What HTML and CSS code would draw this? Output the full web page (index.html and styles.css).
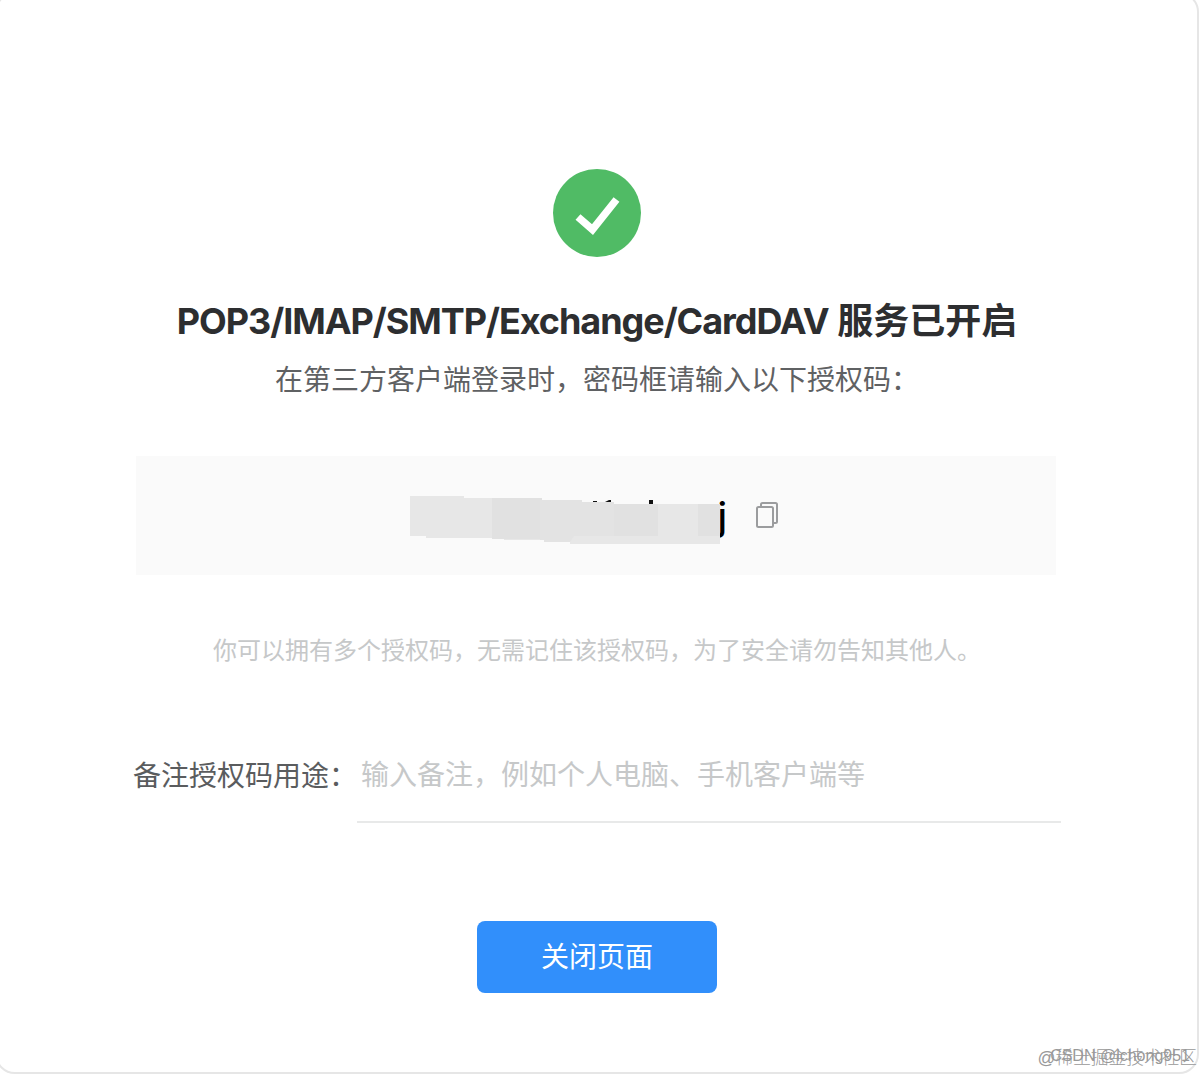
FILE: index.html
```html
<!DOCTYPE html>
<html lang="zh-CN">
<head>
    <meta charset="UTF-8" />
    <meta name="viewport" content="width=device-width, initial-scale=1.0"/>
    <title>服务已开启</title>
    <link rel="stylesheet" href="styles.css">
</head>
<body>
    <main class="card">
        <svg class="success-icon" viewBox="0 0 88 88">
            <circle cx="44" cy="44" r="44" fill="#50bb65"/>
            <path d="M25 48 L39.5 60.5 L63.5 30.5" fill="none" stroke="#fff" stroke-width="7.5"/>
        </svg>
        <h1 class="title"><span class="title-latin">POP3/IMAP/SMTP/Exchange/CardDAV</span> 服务已开启</h1>
        <p class="subtitle">在第三方客户端登录时，密码框请输入以下授权码：</p>

        <div class="code-box">
            <div class="code-value">
                j
                <!-- Covers the code itself -->
                <svg class="code-mask" viewBox="0 0 320 56">
                    <path d="M185 11h4v2h-4zM197 12l4-2h2v4h-6zM241 10h4v5h-4z" fill="#111"/>
                    <path d="M2 6H56V8H134V10H174V12H206V14H312V54H162V52H136V50H96V48H18V46H2Z" fill="#e7e7e7"/>
                    <path d="M84 8H134V49H84Z" fill="#e1e1e1"/>
                    <path d="M134 10H174V12H206V46H166L162 52H136V50H132V10Z" fill="#e3e3e3"/>
                    <path d="M206 14H250V46H206ZM290 14H312V46H290Z" fill="#e1e1e1"/>
                </svg>
            </div>
            <svg class="copy-icon" viewBox="0 0 22 26">
                <rect x="1" y="5" width="16" height="20" rx="1.5"/>
                <path d="M5 5V2.5Q5 1 6.5 1H19.5Q21 1 21 2.5V19.5Q21 21 19.5 21H17"/>
            </svg>
        </div>

        <p class="hint">你可以拥有多个授权码，无需记住该授权码，为了安全请勿告知其他人。</p>

        <div class="remark-row">
            <label class="remark-label" for="remark">备注授权码用途：</label>
            <input class="remark-input" type="text" id="remark" placeholder="输入备注，例如个人电脑、手机客户端等"/>
        </div>

        <button class="close-btn">关闭页面</button>
    </main>
    <div class="watermark watermark-community">@稀土掘金技术社区</div>
    <div class="watermark watermark-author">CSDN @lchong951</div>
</body>
</html>
```
FILE: styles.css
```css
* {
    box-sizing: border-box;
}

body {
    margin: 0;
    height: 1074px;
    overflow: hidden;
    background: #fff;
    font-family: Inter, 'Noto Sans CJK SC', sans-serif;
    color: #2d2e30;
}

.card {
    display: flex;
    flex-direction: column;
    align-items: center;
    width: 1204px;
    height: 1082px;
    margin: -8px 0 0 -5px;
    padding-top: 175px;
    border: 2px solid #e6e6e6;
    border-radius: 20px;
}

.success-icon {
    width: 88px;
    height: 88px;
}

.title {
    margin: 38px 0 0;
    font-size: 36px;
    line-height: 52px;
    font-weight: 700;
    white-space: nowrap;
}

.title-latin {
    letter-spacing: -1.05px;
}

.subtitle {
    margin: 11px 0 0;
    font-family: 'Noto Sans CJK SC', sans-serif;
    font-size: 28px;
    line-height: 40px;
    color: #5f6163;
}

.code-box {
    display: flex;
    align-items: center;
    width: 920px;
    height: 119px;
    margin-top: 58px;
    margin-right: 2px;
    padding-left: 272px;
    background: #fafafa;
}

.code-value {
    position: relative;
    width: 320px;
    height: 56px;
    padding-right: 1px;
    font-size: 38px;
    line-height: 56px;
    font-weight: 500;
    text-align: right;
    color: #000;
}

.code-mask {
    position: absolute;
    top: 2px;
    left: 0;
    width: 320px;
    height: 56px;
}

.copy-icon {
    width: 22px;
    height: 26px;
    margin: -1px 0 0 28px;
    fill: none;
    stroke: #9b9c9e;
    stroke-width: 2;
}

.hint {
    margin: 56px 0 0;
    font-family: 'Noto Sans CJK SC', sans-serif;
    font-size: 24px;
    line-height: 36px;
    color: #c6c8c9;
}

.remark-row {
    display: flex;
    width: 928px;
    height: 97px;
    margin-top: 59px;
}

.remark-label {
    width: 224px;
    font-family: 'Noto Sans CJK SC', sans-serif;
    font-size: 28px;
    line-height: 97px;
    white-space: nowrap;
    color: #5a5c5e;
}

.remark-input {
    flex: 1;
    padding: 0 4px 2px;
    border: none;
    border-bottom: 2px solid #e8e9e9;
    outline: none;
    background: none;
    font-family: 'Noto Sans CJK SC', sans-serif;
    font-size: 28px;
}

.remark-input::placeholder {
    color: #c6c8c9;
}

.close-btn {
    width: 240px;
    height: 72px;
    margin-top: 98px;
    padding-bottom: 5px;
    border: none;
    border-radius: 8px;
    background: #318ffb;
    color: #fff;
    font-family: 'Noto Sans CJK SC', sans-serif;
    font-size: 28px;
    cursor: pointer;
}

.watermark {
    position: absolute;
    white-space: nowrap;
    line-height: 24px;
    color: #999;
}

.watermark-community {
    right: 7px;
    bottom: 4px;
    font-family: 'Liberation Sans', 'Noto Sans CJK SC', sans-serif;
    font-size: 17.7px;
    font-weight: 300;
}

.watermark-author {
    right: 14px;
    bottom: 6px;
    font-family: 'Liberation Sans', sans-serif;
    font-size: 16px;
}
```
